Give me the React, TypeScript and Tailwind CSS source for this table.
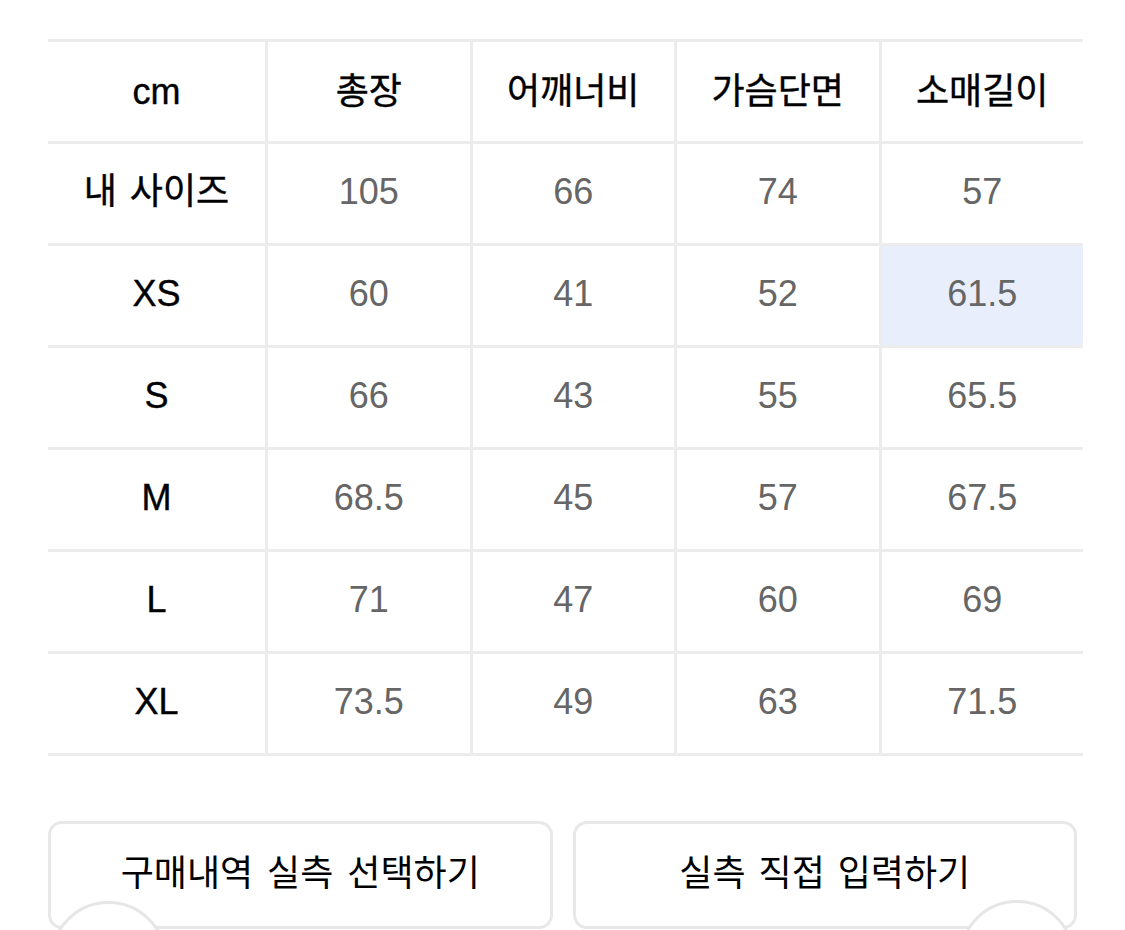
import React from 'react'

const FONT = { fontFamily: '"Liberation Sans", "Noto Sans CJK KR", sans-serif' }

const HEADERS = ['총장', '어깨너비', '가슴단면', '소매길이']

const ROWS: { label: string; values: string[]; highlight?: number }[] = [
  { label: '내 사이즈', values: ['105', '66', '74', '57'] },
  { label: 'XS', values: ['60', '41', '52', '61.5'], highlight: 3 },
  { label: 'S', values: ['66', '43', '55', '65.5'] },
  { label: 'M', values: ['68.5', '45', '57', '67.5'] },
  { label: 'L', values: ['71', '47', '60', '69'] },
  { label: 'XL', values: ['73.5', '49', '63', '71.5'] },
]

function Row({ label, cells, head, highlight, last }: { label: string; cells: string[]; head?: boolean; highlight?: number; last?: boolean }) {
  const pad = head ? 'pt-[1px]' : 'pb-[3px]'
  return (
    <div className={`flex border-t-[3px] border-[#ececec] ${last ? 'h-[105px] border-b-[3px]' : 'h-[102px]'}`}>
      <div className={`w-[217px] shrink-0 flex items-center justify-center ${pad} text-[36px] text-black [word-spacing:3px] [-webkit-text-stroke:0.4px_black]`}>
        {label}
      </div>
      {cells.map((c, i) => (
        <div
          key={i}
          className={`flex-1 flex items-center justify-center border-l-[3px] border-[#ececec] ${pad} text-[36px] ${
            head ? 'text-black [-webkit-text-stroke:0.4px_black]' : 'text-[#666]'
          } ${highlight === i ? 'bg-[#e9eefc] rounded-[2px]' : ''}`}
        >
          {c}
        </div>
      ))}
    </div>
  )
}

export default function App() {
  return (
    <div className="relative w-[1125px] h-[930px] overflow-hidden bg-white" style={FONT}>
      <div className="pt-[39px] pl-[48px] w-[1083px]">
        <Row label="cm" cells={HEADERS} head />
        {ROWS.map((r, i) => (
          <Row key={r.label} label={r.label} cells={r.values} highlight={r.highlight} last={i === ROWS.length - 1} />
        ))}
      </div>

      {/* Action buttons */}
      <div className="flex gap-[20px] pl-[48px] pr-[48px] mt-[65px]">
        <button className="flex-1 h-[108px] rounded-[14px] border-[3px] border-[#e8e8e8] bg-white pb-[2px] text-[36px] text-black [word-spacing:4px]">
          구매내역 실측 선택하기
        </button>
        <button className="flex-1 h-[108px] rounded-[14px] border-[3px] border-[#e8e8e8] bg-white pb-[2px] text-[36px] text-black [word-spacing:3px]">
          실측 직접 입력하기
        </button>
      </div>

      {/* floating round buttons, mostly below the fold */}
      <div className="absolute left-[50px] top-[901px] w-[117px] h-[117px] rounded-full border-[3px] border-[#e6e6e6] bg-white" />
      <div className="absolute left-[959px] top-[900px] w-[116px] h-[116px] rounded-full border-[3px] border-[#e6e6e6] bg-white" />
    </div>
  )
}
